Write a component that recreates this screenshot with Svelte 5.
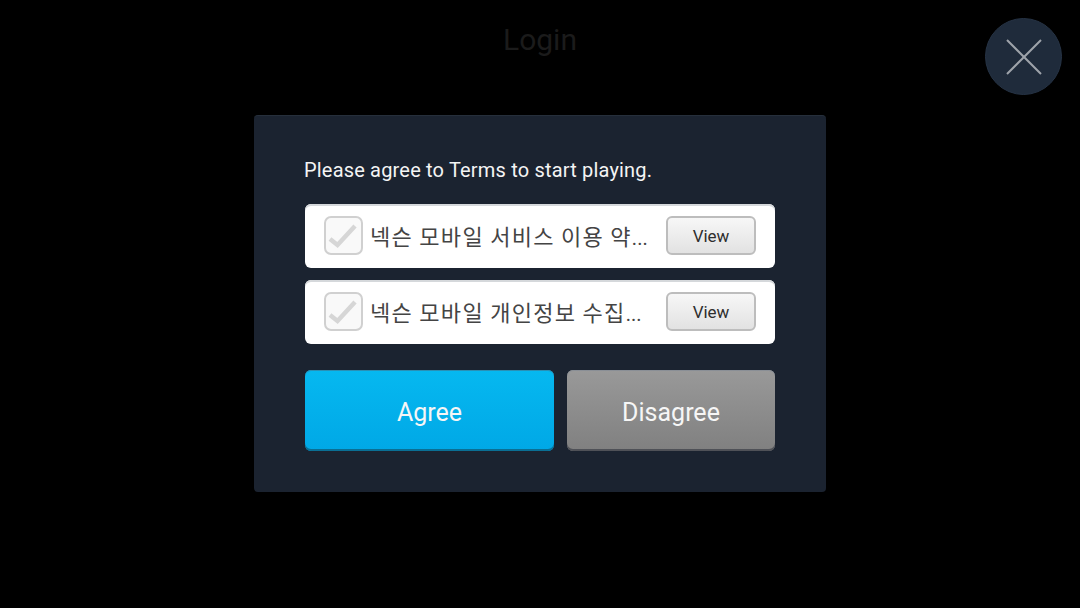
<script>
	const terms = [
		{ id: 'service', label: '넥슨 모바일 서비스 이용 약' },
		{ id: 'privacy', label: '넥슨 모바일 개인정보 수집' }
	];
</script>

<main class="screen">
	<header class="topbar">
		<h1>Login</h1>
		<button class="close" aria-label="Close">
			<svg width="38" height="38" viewBox="0 0 38 38">
				<path d="M2 2 L36 36 M36 2 L2 36" stroke="#9ea3aa" stroke-width="2" fill="none" />
			</svg>
		</button>
	</header>

	<section class="panel">
		<p class="intro">Please agree to Terms to start playing.</p>

		<div class="terms">
			{#each terms as term (term.id)}
				<div class="term">
					<span class="check">
						<svg width="35" height="35" viewBox="0 0 35 35">
							<path d="M4 21 L11.5 27 L29 8" stroke="#d6d6d6" stroke-width="4.5" fill="none" />
						</svg>
					</span>
					<span class="label">{term.label}<span class="dots">...</span></span>
					<button class="view">View</button>
				</div>
			{/each}
		</div>

		<div class="actions">
			<button class="action agree">Agree</button>
			<button class="action disagree">Disagree</button>
		</div>
	</section>
</main>

<style>
	:global(body) { background: #000; }
	.screen {
		width: 1080px;
		height: 608px;
		background: #000;
		display: flex;
		flex-direction: column;
		align-items: center;
		font-family: Roboto, "Noto Sans CJK KR", sans-serif;
		overflow: hidden;
	}
	.topbar {
		position: relative;
		width: 100%;
		height: 115px;
		display: flex;
		justify-content: center;
	}
	h1 {
		margin: 19px 0 0;
		font-size: 30px;
		line-height: 42px;
		font-weight: 400;
		color: #1b1b1b;
	}
	.close {
		position: absolute;
		left: 985px;
		top: 18px;
		width: 77px;
		height: 77px;
		padding: 0;
		border: 1px solid #263345;
		border-radius: 50%;
		background: #1f2b3b;
		display: flex;
		align-items: center;
		justify-content: center;
	}
	.panel {
		box-sizing: border-box;
		width: 572px;
		height: 377px;
		padding: 42px 51px 0;
		background: #1b2330;
		border-radius: 4px;
		border-top: 1px solid #262f3b;
	}
	.intro {
		margin: 0 0 0 -1px;
		font-size: 20px;
		line-height: 24px;
		letter-spacing: 0.18px;
		color: #f4f4f4;
	}
	.terms {
		margin-top: 22px;
		display: flex;
		flex-direction: column;
		gap: 12px;
	}
	.term {
		box-sizing: border-box;
		height: 64px;
		padding: 0 19px 1px;
		display: flex;
		align-items: center;
		background: #fff;
		border-radius: 6px;
		box-shadow: inset 0 2px 0 #d5d8db;
	}
	.check {
		box-sizing: border-box;
		flex: none;
		width: 39px;
		height: 39px;
		border: 2px solid #d0d0d0;
		border-radius: 7px;
		background: #f9f9f9;
		display: flex;
		align-items: center;
		justify-content: center;
	}
	.label {
		flex: 1;
		margin: 0 0 2px 7px;
		font-family: "Noto Sans CJK KR", sans-serif;
		font-size: 22px;
		letter-spacing: 1.3px;
		color: #444;
		white-space: nowrap;
	}
	.dots {
		font-family: Roboto, sans-serif;
		font-size: 20px;
		letter-spacing: 0;
	}
	.view {
		box-sizing: border-box;
		flex: none;
		width: 90px;
		height: 39px;
		padding: 0;
		border: 2px solid #bdbdbd;
		border-radius: 6px;
		background: linear-gradient(#f7f7f7, #e2e2e2);
		font-family: Roboto, sans-serif;
		font-size: 17px;
		font-weight: 400;
		color: #2e2e2e;
	}
	.actions {
		margin-top: 26px;
		display: flex;
		gap: 13px;
	}
	.action {
		box-sizing: border-box;
		height: 81px;
		padding: 3px 0 0;
		border: none;
		border-radius: 6px;
		font-family: Roboto, sans-serif;
		font-size: 25px;
		color: #f6f6f6;
	}
	.agree {
		width: 249px;
		background: linear-gradient(#06b8f0, #00a8e6);
		box-shadow: inset 0 1px 0 #2a8fb4, inset 0 -2px 0 #0a6f94;
	}
	.disagree {
		width: 208px;
		background: linear-gradient(#999, #808080);
		box-shadow: inset 0 1px 0 #8a8f96, inset 0 -2px 0 #4f5157;
	}
</style>
